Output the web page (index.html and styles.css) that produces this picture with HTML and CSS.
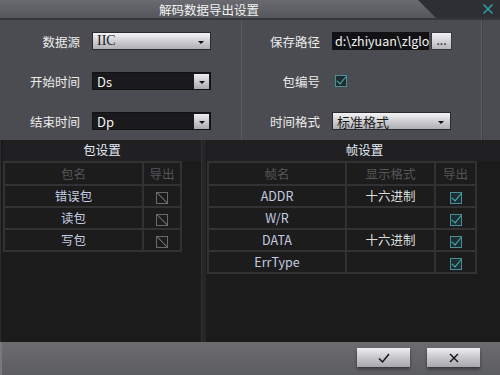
FILE: index.html
```html
<!DOCTYPE html>
<html lang="zh-CN">
<head>
	<meta charset="UTF-8">
	<title>解码数据导出设置</title>
	<link rel="stylesheet" href="styles.css">
</head>
<body>
	<div class="dialog">
		<header class="titlebar">
			<div class="title">解码数据导出设置</div>
			<div class="corner">
				<svg class="close" width="12" height="12" viewBox="0 0 12 12"><path d="M1.5 1.5L10.5 10.5M10.5 1.5L1.5 10.5" stroke="#2a9e9a" stroke-width="1.6"/></svg>
			</div>
		</header>

		<section class="form">
			<div class="form-col">
				<div class="field">
					<label>数据源</label>
					<div class="select light"><span class="serif">IIC</span><span class="caret"></span></div>
				</div>
				<div class="field">
					<label>开始时间</label>
					<div class="select dark"><span>Ds</span><span class="drop-btn"><span class="caret"></span></span></div>
				</div>
				<div class="field">
					<label>结束时间</label>
					<div class="select dark"><span>Dp</span><span class="drop-btn"><span class="caret"></span></span></div>
				</div>
			</div>
			<div class="form-col right">
				<div class="field">
					<label>保存路径</label>
					<div class="path-input"><span>d:\zhiyuan\zlglo</span></div>
					<div class="browse">...</div>
				</div>
				<div class="field">
					<label>包编号</label>
					<span class="check on big"></span>
				</div>
				<div class="field">
					<label>时间格式</label>
					<div class="select light"><span>标准格式</span><span class="caret"></span></div>
				</div>
			</div>
			<div class="form-edge"></div>
		</section>

		<section class="panels">
			<div class="panel panel-left">
				<div class="panel-head">包设置</div>
				<table class="grid grid-left">
					<tr class="head"><td class="c-name">包名</td><td class="c-out">导出</td></tr>
					<tr><td>错误包</td><td><span class="check off"></span></td></tr>
					<tr><td>读包</td><td><span class="check off"></span></td></tr>
					<tr><td>写包</td><td><span class="check off"></span></td></tr>
				</table>
			</div>
			<div class="splitter"></div>
			<div class="panel panel-right">
				<div class="panel-head">帧设置</div>
				<table class="grid grid-right">
					<tr class="head"><td class="c-frame">帧名</td><td class="c-fmt">显示格式</td><td class="c-out">导出</td></tr>
					<tr><td>ADDR</td><td class="fmt">十六进制</td><td><span class="check on"></span></td></tr>
					<tr><td>W/R</td><td class="fmt"></td><td><span class="check on"></span></td></tr>
					<tr><td>DATA</td><td class="fmt">十六进制</td><td><span class="check on"></span></td></tr>
					<tr><td>ErrType</td><td class="fmt"></td><td><span class="check on"></span></td></tr>
				</table>
			</div>
		</section>

		<footer class="footer">
			<button class="btn">
				<svg width="14" height="12" viewBox="0 0 14 12"><path d="M2 6.5L5.5 10L12 2" fill="none" stroke="#111" stroke-width="1.4"/></svg>
			</button>
			<button class="btn">
				<svg width="12" height="12" viewBox="0 0 12 12"><path d="M2 2L10 10M10 2L2 10" stroke="#111" stroke-width="1.4"/></svg>
			</button>
		</footer>
	</div>
</body>
</html>
```

FILE: styles.css
```css
body {
	margin: 0;
	background: #4b4c51;
	font-family: "Noto Sans CJK SC", "Noto Sans", sans-serif;
	font-size: 12px;
	color: #ececec;
}

.dialog {
	width: 500px;
	height: 375px;
	display: flex;
	flex-direction: column;
	overflow: hidden;
}

/* title bar */
.titlebar {
	height: 18px;
	display: flex;
	background: linear-gradient(#6a6b70, #55565b);
	border-bottom: 2px solid #36373b;
}

.title {
	flex: 1;
	text-align: center;
	line-height: 19px;
	font-size: 12.5px;
	color: #f2f2f2;
}

.corner {
	width: 82px;
	display: flex;
	align-items: center;
	justify-content: flex-end;
	padding-right: 6px;
	box-sizing: border-box;
	background: #2e2f34;
	clip-path: polygon(0 0, 100% 0, 100% 100%, 18px 100%);
}

/* form */
.form {
	height: 120px;
	display: grid;
	grid-template-columns: 242px 240px 1fr;
}

.form-col {
	border-right: 1px solid #5c5d62;
	padding-top: 1px;
}

.form-edge {
	border-left: 1px solid #3f4045;
}

.field {
	height: 40px;
	display: flex;
	align-items: center;
	gap: 12px;
}

.field label {
	width: 80px;
	text-align: right;
	font-size: 12.5px;
}

.right .field label {
	width: 78px;
}

.select {
	width: 119px;
	height: 18px;
	box-sizing: border-box;
	display: flex;
	align-items: center;
	justify-content: space-between;
	padding-left: 4px;
	font-size: 13px;
	border: 1px solid #2a2a2e;
}

.select.light {
	color: #1a1a1a;
	background: linear-gradient(#f4f4f6, #c9c9cd 60%, #b0b0b5);
	padding-right: 6px;
}

.serif {
	font-family: "Liberation Serif", serif;
	font-size: 14px;
}

.select.dark {
	background: #1a1a1c;
	color: #f4f4f4;
	padding-right: 1px;
	border-color: #111;
}

.drop-btn {
	width: 15px;
	height: 15px;
	display: flex;
	align-items: center;
	justify-content: center;
	background: linear-gradient(#eeeef0, #a9a9ae);
}

.caret {
	width: 0;
	height: 0;
	border-left: 3px solid transparent;
	border-right: 3px solid transparent;
	border-top: 3px solid #111;
	margin-top: 2px;
}

.path-input {
	width: 97px;
	height: 18px;
	box-sizing: border-box;
	background: #121214;
	color: #f4f4f4;
	font-size: 12.5px;
	line-height: 17px;
	padding-left: 3px;
	overflow: hidden;
	white-space: nowrap;
}

.browse {
	width: 21px;
	height: 18px;
	margin-left: -10px;
	box-sizing: border-box;
	text-align: center;
	line-height: 14px;
	color: #222;
	background: linear-gradient(#f2f2f4, #b6b6bb);
	border: 1px solid #38393d;
}

/* checkboxes */
.check {
	display: inline-block;
	width: 12px;
	height: 12px;
	box-sizing: border-box;
	vertical-align: middle;
	position: relative;
}

.check.big {
	margin-left: 3px;
}

.check.on {
	border: 1px solid #4a8f96;
	background: #1f2c31;
}

.check.on::after {
	content: "";
	position: absolute;
	left: 3px;
	top: -2px;
	width: 4px;
	height: 9px;
	border-right: 1.5px solid #3cbcb8;
	border-bottom: 1.5px solid #3cbcb8;
	transform: rotate(40deg);
}

.check.off {
	border: 1px solid #6a6a6a;
	background: linear-gradient(45deg, transparent 46%, #6a6a6a 48%, #6a6a6a 54%, transparent 56%);
}

/* panels */
.panels {
	height: 202px;
	display: flex;
	background: #1b1b1c;
}

.panel-head {
	height: 21px;
	line-height: 20px;
	text-align: center;
	background: #202022;
	color: #e6ecf5;
	font-size: 12.5px;
}

.panel-left {
	width: 201px;
	padding-left: 2px;
	box-sizing: border-box;
	border-left: 1px solid #2c2c2e;
}

.panel-right {
	flex: 1;
	padding-left: 1px;
}

.panel-right .panel-head {
	padding-left: 22px;
}

.splitter {
	width: 4px;
	background: #262628;
	border-left: 1px solid #303032;
}

.grid {
	border-collapse: collapse;
	background: #1c1c1d;
	font-size: 12.5px;
}

.grid td {
	border: 2px solid #323234;
	height: 20px;
	padding: 0;
	text-align: center;
	color: #c3cbe0;
	line-height: 18px;
}

.grid .head td {
	height: 21px;
	color: #555558;
}

.grid .fmt {
	color: #dcdcdc;
}

.c-name { width: 137px; }
.grid-left .c-out { width: 36px; }

.c-frame { width: 136px; }
.c-fmt { width: 87px; }
.grid-right .c-out { width: 39px; }

/* footer */
.footer {
	flex: 1;
	display: flex;
	justify-content: flex-end;
	align-items: flex-start;
	gap: 17px;
	padding: 6px 20px 0 0;
	background: linear-gradient(#6c6c6e, #5c5d60);
	border-left: 2px solid #7a7a7c;
}

.btn {
	width: 53px;
	height: 19px;
	padding: 0;
	border: 0;
	display: flex;
	align-items: center;
	justify-content: center;
	background: linear-gradient(#f0f0f2, #c4c4c9 55%, #a8a8ae);
	box-shadow: 0 2px 3px rgba(0, 0, 0, 0.45);
}
```
